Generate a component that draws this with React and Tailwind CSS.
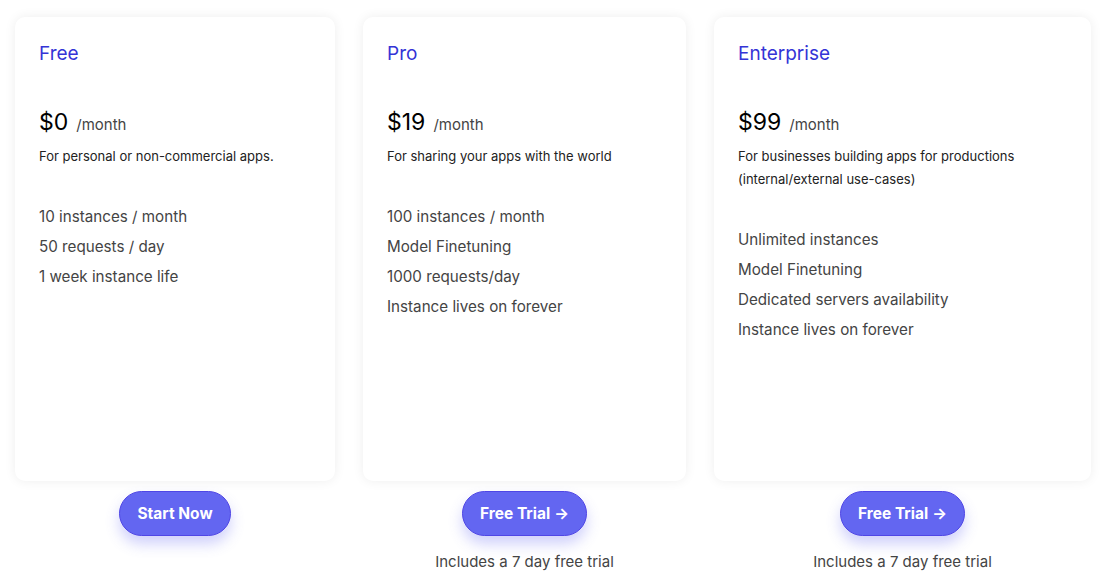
import React from "react";

const plans = [
  {
    name: "Free",
    price: "$0",
    desc: ["For personal or non-commercial apps."],
    features: ["10 instances / month", "50 requests / day", "1 week instance life"],
    width: "w-[320px]",
    button: "Start Now",
    arrow: false,
    note: null,
  },
  {
    name: "Pro",
    price: "$19",
    desc: ["For sharing your apps with the world"],
    features: ["100 instances / month", "Model Finetuning", "1000 requests/day", "Instance lives on forever"],
    width: "w-[323px]",
    button: "Free Trial",
    arrow: true,
    note: "Includes a 7 day free trial",
  },
  {
    name: "Enterprise",
    price: "$99",
    desc: ["For businesses building apps for productions", "(internal/external use-cases)"],
    features: ["Unlimited instances", "Model Finetuning", "Dedicated servers availability", "Instance lives on forever"],
    width: "w-[377px]",
    button: "Free Trial",
    arrow: true,
    note: "Includes a 7 day free trial",
  },
];

export default function App() {
  return (
    <div
      className="w-[1108px] h-[586px] bg-white flex gap-7 pl-[15px] pt-[17px]"
      style={{ fontFamily: "Inter, 'Noto Sans', sans-serif" }}
    >
      {plans.map((p) => (
        <div key={p.name} className={`flex flex-col items-center ${p.width}`}>
          <div className="w-full h-[464px] bg-white rounded-[10px] shadow-[0_0_12px_rgba(0,0,0,0.07)] px-6 pt-[23px]">
            <div className="text-[19px] leading-[28px] text-[#3434d6]">{p.name}</div>
            <div className="mt-[38px] flex items-baseline">
              <span className="text-[23px] leading-[32px] text-black">{p.price}</span>
              <span className="ml-[8px] text-[15px] text-[#444]">/month</span>
            </div>
            <div className="mt-[7px] text-[13px] leading-[23px] text-[#222]">
              {p.desc.map((d) => (
                <div key={d}>{d}</div>
              ))}
            </div>
            <div className="mt-[34px] flex flex-col">
              {p.features.map((f) => (
                <div key={f} className="text-[15.2px] leading-[30px] text-[#444]">
                  {f}
                </div>
              ))}
            </div>
          </div>
          <button className="mt-[10px] h-[45px] px-[17px] rounded-full bg-[#6366f1] border border-[#4f46e5] text-white font-bold text-[15.5px] shadow-[0_8px_14px_rgba(99,102,241,0.3)] flex items-center gap-1">
            {p.button}
            {p.arrow && <span>→</span>}
          </button>
          {p.note && (
            <div className="mt-[15px] text-[15px] leading-[22px] text-[#444]">{p.note}</div>
          )}
        </div>
      ))}
    </div>
  );
}
